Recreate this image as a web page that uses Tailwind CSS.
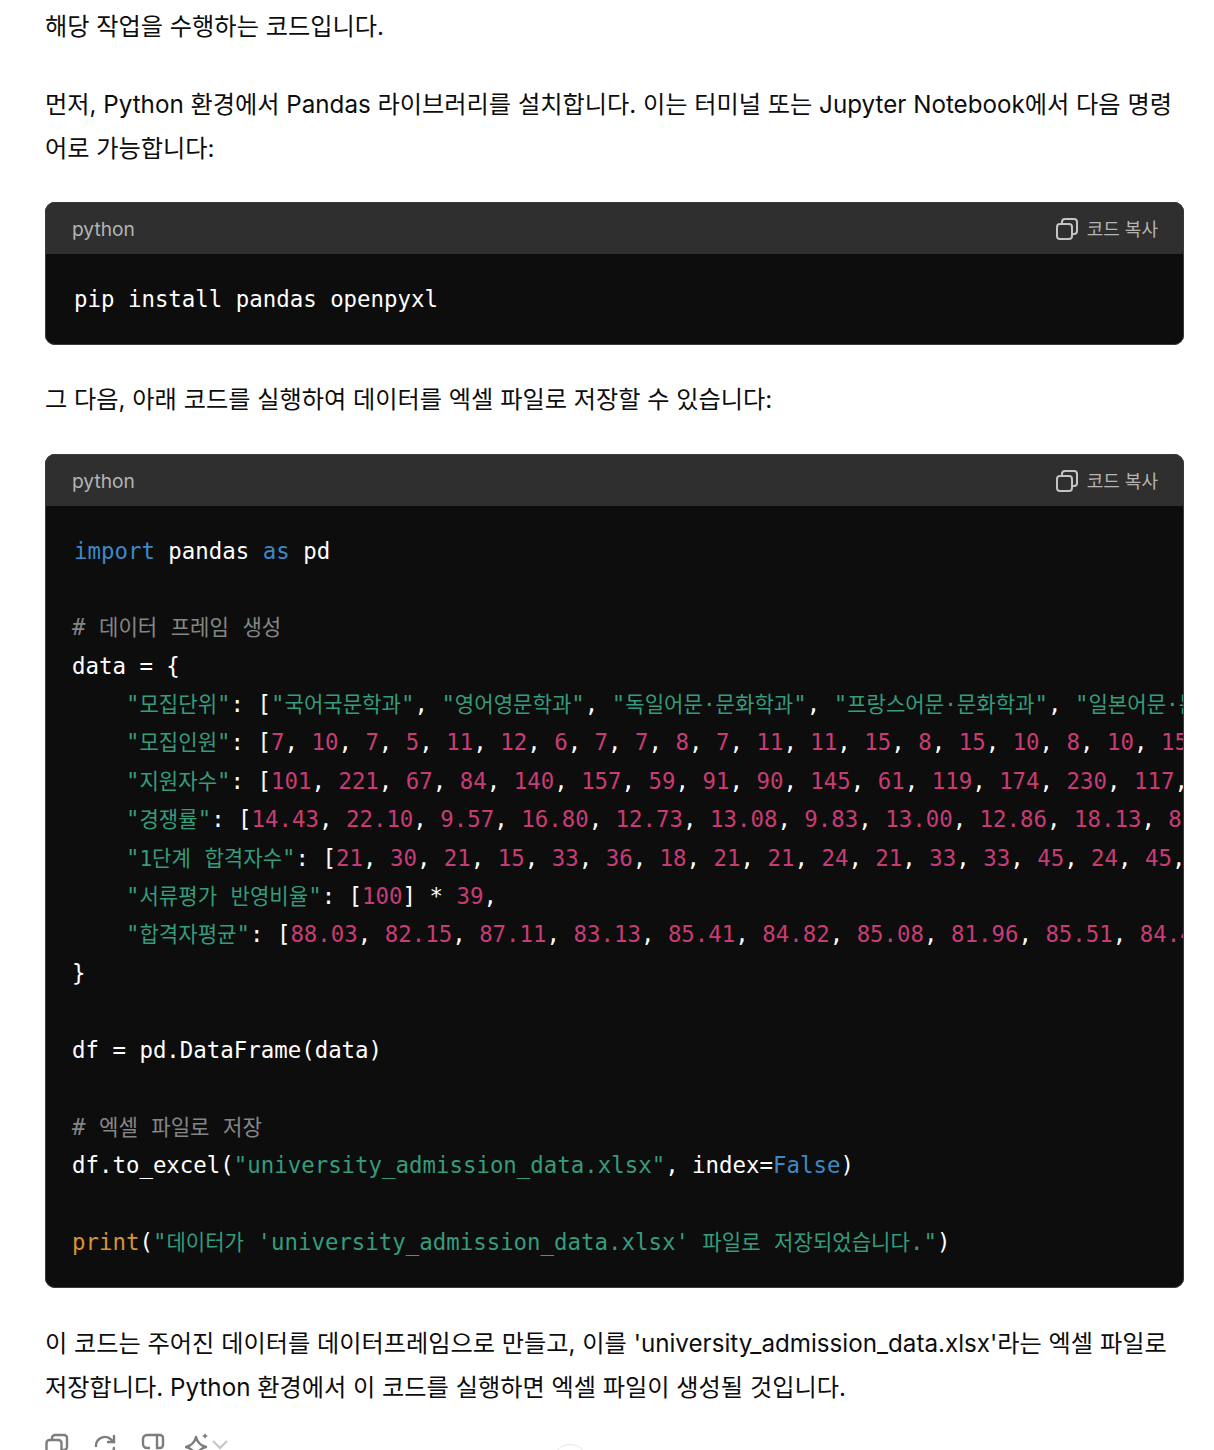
<!DOCTYPE html>
<html lang="ko">
<head>
  <meta charset="UTF-8">
  <title>Chat answer</title>
  <script src="https://cdn.jsdelivr.net/npm/@tailwindcss/browser@4"></script>
</head>
<body class="bg-white text-[#0d0d0d] font-['Inter','Noto_Sans_CJK_KR',sans-serif] overflow-hidden h-[1450px] relative">
  <div class="px-[45px] w-[1139px] box-content pt-[5px] text-[24.2px] leading-[44px]">
    <p>해당 작업을 수행하는 코드입니다.</p>
    <p class="mt-[34px]">먼저, Python 환경에서 Pandas 라이브러리를 설치합니다. 이는 터미널 또는 Jupyter Notebook에서 다음 명령어로 가능합니다:</p>

    <div class="mt-[31px] rounded-[10px] overflow-hidden bg-[#0d0d0d] outline outline-[#3a3a3a] -outline-offset-1">
      <div class="h-[52px] pt-[3px] bg-[#2f2f2f] flex items-center justify-between pl-[27px] pr-[26px] text-[19.2px] leading-none text-[#b4b4b4]">
        <span>python</span>
        <span class="flex items-center gap-[8px] text-[18px]">
          <svg class="w-[24px] h-[24px] -mt-[1px]" viewBox="0 0 24 24" fill="none" stroke="#c4c4c4" stroke-width="2"><rect x="2" y="7" width="15" height="15" rx="3"/><path d="M7 7V5a3 3 0 0 1 3-3h9a3 3 0 0 1 3 3v9a3 3 0 0 1-3 3h-2"/></svg>
          <span>코드 복사</span>
        </span>
      </div>
      <pre class="px-[29px] pt-[26px] pb-[27px] text-[22.4px] leading-[38.4px] text-white font-['DejaVu_Sans_Mono','Noto_Sans_CJK_KR',monospace]">pip install pandas openpyxl</pre>
    </div>

    <p class="mt-[33px]">그 다음, 아래 코드를 실행하여 데이터를 엑셀 파일로 저장할 수 있습니다:</p>

    <div class="mt-[32px] rounded-[10px] overflow-hidden bg-[#0d0d0d] outline outline-[#3a3a3a] -outline-offset-1">
      <div class="h-[52px] pt-[3px] bg-[#2f2f2f] flex items-center justify-between pl-[27px] pr-[26px] text-[19.2px] leading-none text-[#b4b4b4]">
        <span>python</span>
        <span class="flex items-center gap-[8px] text-[18px]">
          <svg class="w-[24px] h-[24px] -mt-[1px]" viewBox="0 0 24 24" fill="none" stroke="#c4c4c4" stroke-width="2"><rect x="2" y="7" width="15" height="15" rx="3"/><path d="M7 7V5a3 3 0 0 1 3-3h9a3 3 0 0 1 3 3v9a3 3 0 0 1-3 3h-2"/></svg>
          <span>코드 복사</span>
        </span>
      </div>
      <pre class="overflow-hidden pl-[27px] pt-[25px] pb-[27px] text-[22.4px] leading-[38.4px] text-white font-['DejaVu_Sans_Mono','Noto_Sans_CJK_KR',monospace] [&_i]:not-italic [&_i]:text-[21.1px] [&_i]:leading-none [&_em]:not-italic [&_em]:text-[#c83c76] [&_u]:no-underline [&_u]:text-[#359c7c] [&_q]:text-[#3d88c6] [&_q]:before:content-none [&_q]:after:content-none"><span class="block ml-[2px] mt-[1px] -mb-[1px]"><q>import</q> pandas <q>as</q> pd</span>
<span class="text-white/50"># <i>데이터</i> <i>프레임</i> <i>생성</i></span>
data = {
    <u>"<i>모집단위</i>"</u>: [<u>"<i>국어국문학과</i>"</u>, <u>"<i>영어영문학과</i>"</u>, <u>"<i>독일어문·문화학과</i>"</u>, <u>"<i>프랑스어문·문화학과</i>"</u>, <u>"<i>일본어문·문화학과</i>"</u>],
    <u>"<i>모집인원</i>"</u>: [<em>7</em>, <em>10</em>, <em>7</em>, <em>5</em>, <em>11</em>, <em>12</em>, <em>6</em>, <em>7</em>, <em>7</em>, <em>8</em>, <em>7</em>, <em>11</em>, <em>11</em>, <em>15</em>, <em>8</em>, <em>15</em>, <em>10</em>, <em>8</em>, <em>10</em>, <em>15</em>],
    <u>"<i>지원자수</i>"</u>: [<em>101</em>, <em>221</em>, <em>67</em>, <em>84</em>, <em>140</em>, <em>157</em>, <em>59</em>, <em>91</em>, <em>90</em>, <em>145</em>, <em>61</em>, <em>119</em>, <em>174</em>, <em>230</em>, <em>117</em>, <em>230</em>],
    <u>"<i>경쟁률</i>"</u>: [<em>14.43</em>, <em>22.10</em>, <em>9.57</em>, <em>16.80</em>, <em>12.73</em>, <em>13.08</em>, <em>9.83</em>, <em>13.00</em>, <em>12.86</em>, <em>18.13</em>, <em>8.13</em>],
    <u>"<i>1단계</i> <i>합격자수</i>"</u>: [<em>21</em>, <em>30</em>, <em>21</em>, <em>15</em>, <em>33</em>, <em>36</em>, <em>18</em>, <em>21</em>, <em>21</em>, <em>24</em>, <em>21</em>, <em>33</em>, <em>33</em>, <em>45</em>, <em>24</em>, <em>45</em>, <em>30</em>],
    <u>"<i>서류평가</i> <i>반영비율</i>"</u>: [<em>100</em>] * <em>39</em>,
    <u>"<i>합격자평균</i>"</u>: [<em>88.03</em>, <em>82.15</em>, <em>87.11</em>, <em>83.13</em>, <em>85.41</em>, <em>84.82</em>, <em>85.08</em>, <em>81.96</em>, <em>85.51</em>, <em>84.41</em>],
}

df = pd.DataFrame(data)

<span class="text-white/50"># <i>엑셀</i> <i>파일로</i> <i>저장</i></span>
df.to_excel(<u>"university_admission_data.xlsx"</u>, index=<q>False</q>)

<span class="text-[#d99330]">print</span>(<u>"<i>데이터가</i> 'university_admission_data.xlsx' <i>파일로</i> <i>저장되었습니다</i>."</u>)</pre>
    </div>

    <p class="mt-[34px]">이 코드는 주어진 데이터를 데이터프레임으로 만들고, 이를 'university_admission_data.xlsx'라는 엑셀 파일로 저장합니다. Python 환경에서 이 코드를 실행하면 엑셀 파일이 생성될 것입니다.</p>

    <div class="mt-[23px] flex items-start gap-[24px] text-[#7d7d7d]">
      <svg class="w-[24px] h-[24px] shrink-0" viewBox="0 0 24 24" fill="none" stroke="currentColor" stroke-width="2.4"><rect x="1.5" y="7" width="15" height="15" rx="3"/><path d="M7 7V5a3 3 0 0 1 3-3h9a3 3 0 0 1 3 3v9a3 3 0 0 1-3 3h-2"/></svg>
      <svg class="w-[24px] h-[24px] shrink-0" viewBox="0 0 24 24" fill="none" stroke="currentColor" stroke-width="2.4" stroke-linecap="round"><path d="M3 13a9 9 0 0 1 15.5-6.2L21 9"/><path d="M21 3v6h-6"/><path d="M21 15a9 9 0 0 1-.5 2"/></svg>
      <svg class="w-[24px] h-[24px] shrink-0" viewBox="0 0 24 24" fill="none" stroke="currentColor" stroke-width="2.4"><path d="M16 2H6a4 4 0 0 0-4 4v5a4 4 0 0 0 4 4h3"/><path d="M16 2h3a3 3 0 0 1 3 3v7a3 3 0 0 1-3 3h-3z"/></svg>
      <span class="flex items-start gap-[2px] -ml-[4px]">
        <svg class="w-[24px] h-[24px] shrink-0" viewBox="0 0 24 24" fill="none" stroke="currentColor" stroke-width="2.4" stroke-linejoin="round"><path d="M11 4c1.2 5 4 8.5 10 10-6 1.5-8.8 5-10 10-1.2-5-4-8.5-10-10 6-1.5 8.8-5 10-10z"/><path d="M20 0l1 2 2 1-2 1-1 2-1-2-2-1 2-1z" fill="currentColor" stroke="none"/></svg>
        <svg class="w-[18px] h-[18px] mt-[3px] shrink-0 text-[#c4c4c4]" viewBox="0 0 18 18" fill="none" stroke="currentColor" stroke-width="2"><path d="M2 5l7 7 7-7"/></svg>
      </span>
    </div>
  </div>
  <div class="absolute left-[552px] top-[1444px] w-[36px] h-[36px] rounded-full border border-[#e5e5e5] bg-white"></div>
</body>
</html>
